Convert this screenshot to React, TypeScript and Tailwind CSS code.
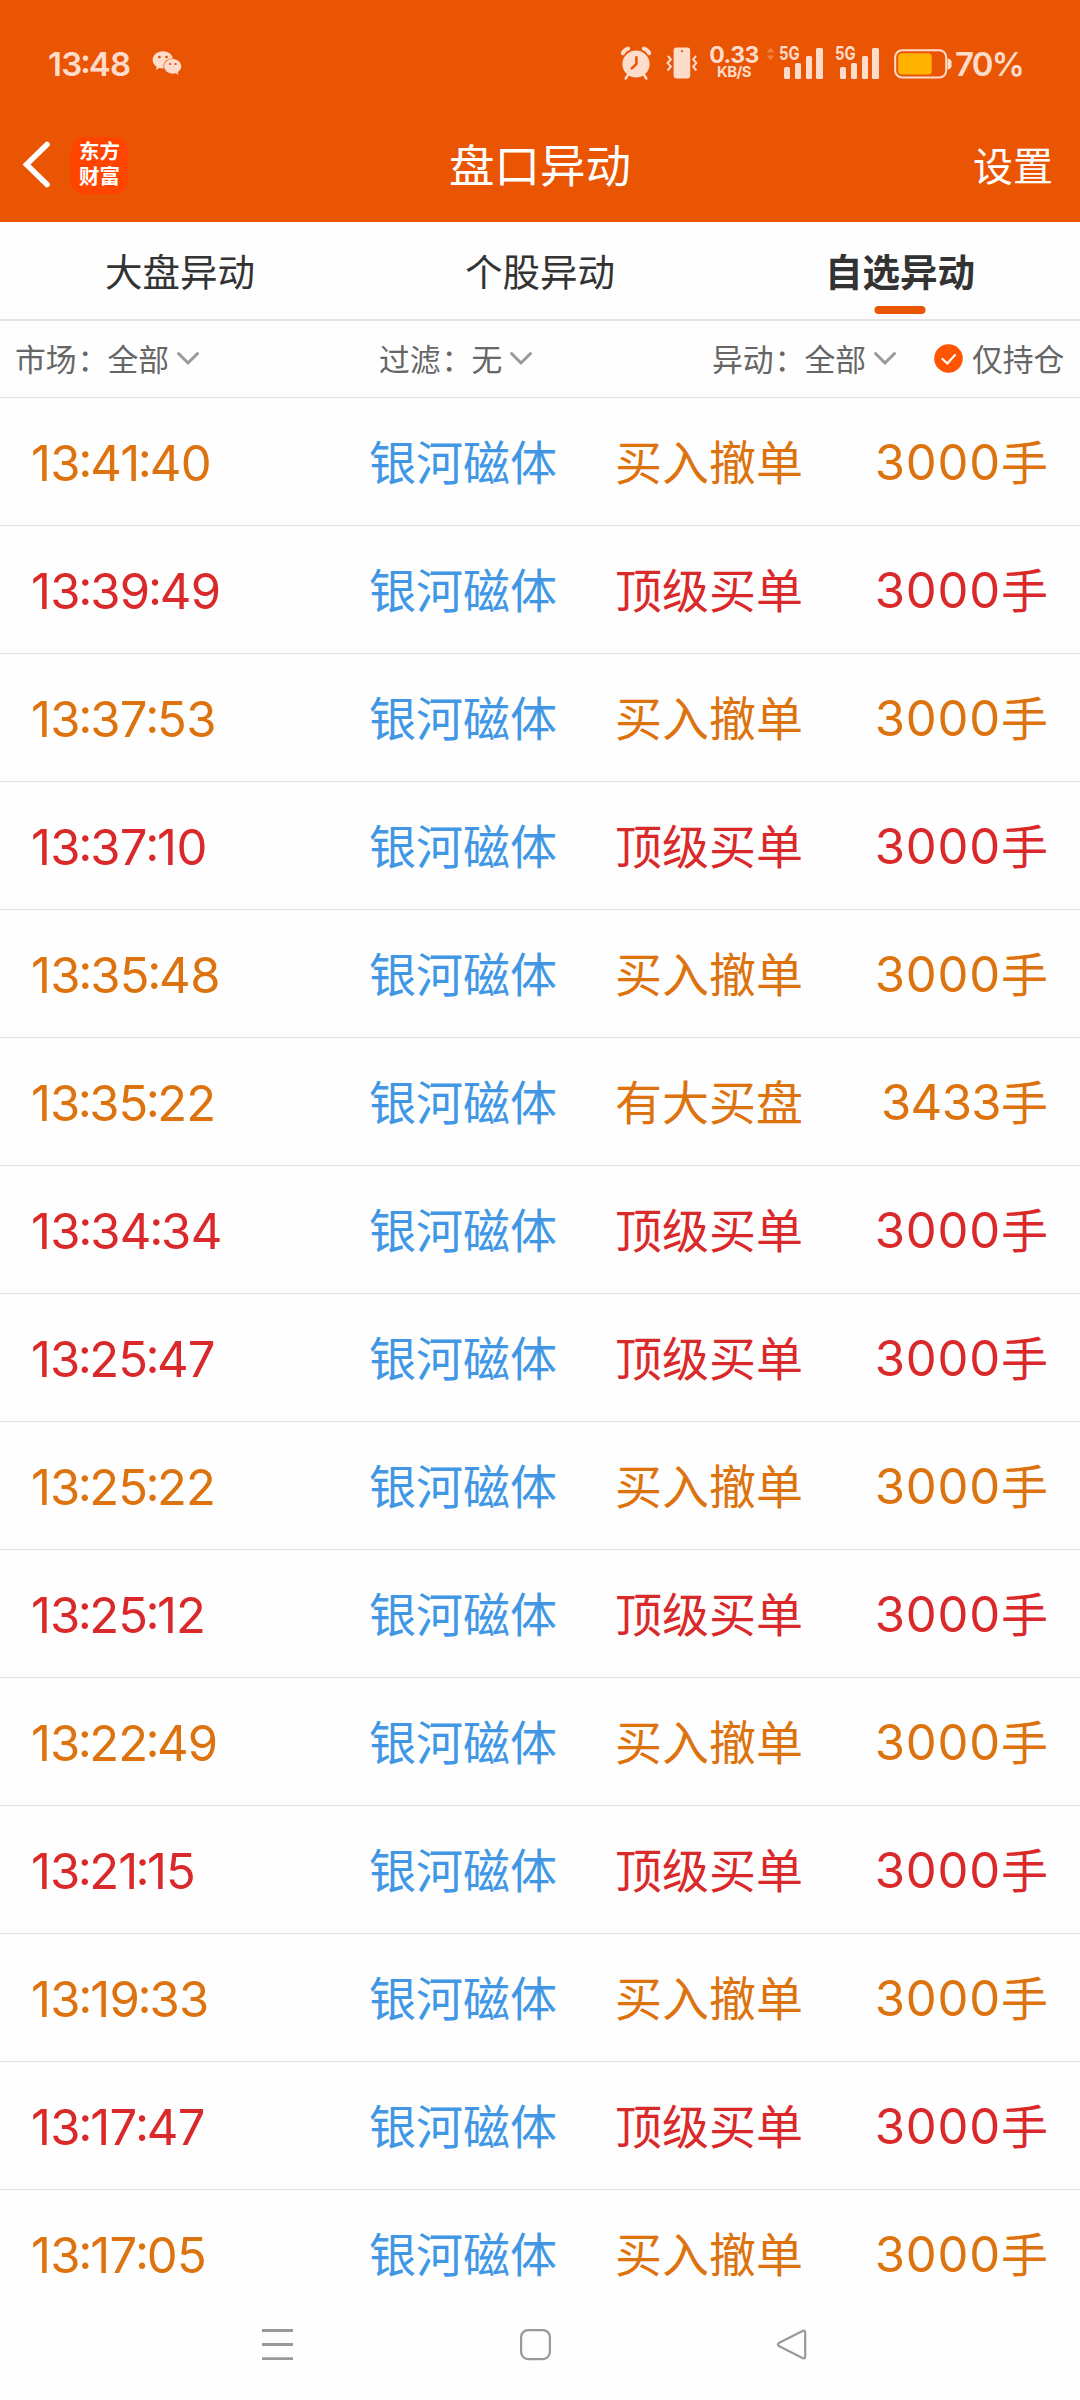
import { Fragment } from "react";
import { FaWeixin } from "react-icons/fa";

type Tone = "orange" | "red";

const CANCEL = "买入撤单";
const TOP = "顶级买单";

const rows: { time: string; kind: string; volume: string; tone: Tone }[] = [
  { time: "13:41:40", kind: CANCEL, volume: "3000", tone: "orange" },
  { time: "13:39:49", kind: TOP, volume: "3000", tone: "red" },
  { time: "13:37:53", kind: CANCEL, volume: "3000", tone: "orange" },
  { time: "13:37:10", kind: TOP, volume: "3000", tone: "red" },
  { time: "13:35:48", kind: CANCEL, volume: "3000", tone: "orange" },
  { time: "13:35:22", kind: "有大买盘", volume: "3433", tone: "orange" },
  { time: "13:34:34", kind: TOP, volume: "3000", tone: "red" },
  { time: "13:25:47", kind: TOP, volume: "3000", tone: "red" },
  { time: "13:25:22", kind: CANCEL, volume: "3000", tone: "orange" },
  { time: "13:25:12", kind: TOP, volume: "3000", tone: "red" },
  { time: "13:22:49", kind: CANCEL, volume: "3000", tone: "orange" },
  { time: "13:21:15", kind: TOP, volume: "3000", tone: "red" },
  { time: "13:19:33", kind: CANCEL, volume: "3000", tone: "orange" },
  { time: "13:17:47", kind: TOP, volume: "3000", tone: "red" },
  { time: "13:17:05", kind: CANCEL, volume: "3000", tone: "orange" },
];

const tones: Record<Tone, string> = {
  orange: "text-[#dd730f]",
  red: "text-[#d9292b]",
};

/** Clock text with tight colons centred on the digits. */
function Clock({ value }: { value: string }) {
  return (
    <>
      {value.split(":").map((part, i) => (
        <Fragment key={i}>
          {i > 0 && <span className="-mx-[0.035em] inline-block -translate-y-[0.09em]">:</span>}
          {part}
        </Fragment>
      ))}
    </>
  );
}

function AlarmIcon() {
  return (
    <svg width="32" height="34" viewBox="0 0 32 34" className="shrink-0">
      <g stroke="currentColor" strokeLinecap="round" fill="none">
        <path d="M2.8 7.2Q4.5 3.4 8.2 2.6M29.2 7.2Q27.5 3.4 23.8 2.6" strokeWidth="4" />
        <path d="M8 29l-2.3 3.4M24 29l2.3 3.4" strokeWidth="2.6" />
      </g>
      <circle cx="16" cy="18" r="13.6" fill="currentColor" />
      <path d="M16.4 11.2V18l-4.6 4.4" stroke="#ea5504" strokeWidth="2.6" strokeLinecap="round" fill="none" />
    </svg>
  );
}

function VibrateIcon() {
  return (
    <svg width="32" height="32" viewBox="0 0 32 32" className="shrink-0">
      <rect x="7.6" y="0.5" width="16.6" height="31" rx="3" fill="currentColor" />
      <circle cx="16" cy="4.2" r="1.1" fill="#ea5504" />
      <path
        d="M2 9l2.8 3.4L1.6 16l3.2 3.6L1.6 23.5M30 9l-2.8 3.4 3.2 3.6-3.2 3.6 3.2 3.9"
        stroke="currentColor"
        strokeWidth="2"
        fill="none"
      />
    </svg>
  );
}

function Signal() {
  return (
    <div className="relative h-8 w-11 shrink-0">
      <span className="absolute -top-[3px] left-0 origin-left scale-x-[0.78] text-[19px] leading-[20px] font-bold">5G</span>
      <div className="flex h-full items-end gap-[4.5px] pl-[5px]">
        <i className="h-[12px] w-[6.3px] rounded-[1.5px] bg-current" />
        <i className="h-[15.5px] w-[6.3px] rounded-[1.5px] bg-current" />
        <i className="h-[23px] w-[6.3px] rounded-[1.5px] bg-current" />
        <i className="h-[31px] w-[6.3px] rounded-[1.5px] bg-current" />
      </div>
    </div>
  );
}

function StatusBar() {
  return (
    <div className="flex h-[108px] items-center pt-[17px] pl-[48px] text-[#fddccb]">
      <span className="w-[104px] pt-[3px] text-[33px] leading-none font-semibold tracking-[-0.8px]">
        <Clock value="13:48" />
      </span>
      <FaWeixin className="h-[30px] w-[30px]" />
      <div className="ml-[438px] flex h-8 items-center">
        <AlarmIcon />
        <div className="ml-[14px] flex">
          <VibrateIcon />
        </div>
        <div className="ml-[10px] flex h-8 w-[52px] flex-col items-center">
          <span className="-mt-[1px] text-[23px] leading-[19px] font-bold tracking-[-0.6px]">0.33</span>
          <span className="text-[15px] leading-[14px] font-bold tracking-[-0.6px]">KB/S</span>
        </div>
        <svg width="9" height="14" viewBox="0 0 9 14" className="mb-[18px] ml-[6px] opacity-30">
          <path d="M0.5 5.5l4-5 4 5zM0.5 8.5h8l-4 5z" fill="currentColor" />
        </svg>
        <div className="ml-[4px] flex gap-3">
          <Signal />
          <Signal />
        </div>
        <svg width="58" height="30" viewBox="0 0 58 30" className="mt-[2px] ml-[15px] shrink-0">
          <rect x="1.2" y="1.2" width="51" height="27.4" rx="7" fill="none" stroke="currentColor" strokeWidth="2" />
          <rect x="4.2" y="4.2" width="33.5" height="21.4" rx="3.5" fill="#ffb300" />
          <path d="M53.5 9.5h1q3 1 3 3v5q0 2-3 3h-1z" fill="currentColor" />
        </svg>
        <span className="mt-[3px] ml-[3px] text-[33px] leading-none font-semibold tracking-[-1.8px]">70%</span>
      </div>
    </div>
  );
}

function TitleBar() {
  return (
    <div className="grid h-[114px] grid-cols-3 items-center text-white">
      <div className="flex items-center pl-[21px]">
        <svg width="30" height="48" viewBox="0 0 30 48" fill="none" stroke="currentColor" strokeWidth="5.500" strokeLinecap="round" strokeLinejoin="miter">
          <path d="M26 3.500L5.500 23.500L26 43.500" />
        </svg>
        <div className="ml-[20px] flex h-[57px] w-[57px] flex-col items-center justify-center rounded-[13px] bg-[#ff4400] pb-[2px] text-[20.500px] leading-[25px] font-bold">
          <span>东方</span>
          <span>财富</span>
        </div>
      </div>
      <h1 className="pt-[4px] text-center text-[45.500px] leading-[60px]">盘口异动</h1>
      <button className="pt-[3px] pr-[27px] text-right text-[40px] leading-[60px]">设置</button>
    </div>
  );
}

function Tabs() {
  return (
    <nav className="grid h-[99px] grid-cols-3 border-b-2 border-[#e4e4e4] text-center text-[37.500px] leading-[101px] text-[#333]">
      <span className="h-[97px]">大盘异动</span>
      <span className="h-[97px]">个股异动</span>
      <span className="relative h-[97px] font-bold">
        自选异动
        <i className="absolute bottom-[5px] left-1/2 h-2 w-[51px] -translate-x-1/2 rounded-full bg-[#ea5504]" />
      </span>
    </nav>
  );
}

function Filter({ label, value }: { label: string; value: string }) {
  return (
    <div className="flex items-center">
      <span>{label}</span>
      <span className="translate-x-[1px]">：</span>
      <span>{value}</span>
      <svg width="24" height="16" viewBox="0 0 24 16" fill="none" stroke="#999" strokeWidth="3" strokeLinecap="round" className="ml-[7px]">
        <path d="M2.500 2.500L12 12l9.500-9.500" />
      </svg>
    </div>
  );
}

function Filters() {
  return (
    <div className="flex h-[77px] items-center border-b border-[#e4e4e4] pl-[15px] text-[30.800px] leading-[77px] whitespace-nowrap text-[#666]">
      <div className="w-[364px]"><Filter label="市场" value="全部" /></div>
      <div className="w-[333px]"><Filter label="过滤" value="无" /></div>
      <div className="w-[222px]"><Filter label="异动" value="全部" /></div>
      <svg width="29" height="29" viewBox="0 0 29 29" fill="none" className="mr-[9px] mb-[2px]">
        <circle cx="14.500" cy="14.500" r="14.300" fill="#ff5500" />
        <path d="M8.500 15l4.800 4.500 7.700-8.500" stroke="#fff" strokeWidth="2.200" strokeLinecap="round" />
      </svg>
      <span>仅持仓</span>
    </div>
  );
}

export default function App() {
  return (
    <div lang="zh-CN" className="flex h-[2400px] w-[1080px] flex-col overflow-hidden bg-[#fefefe] font-[Inter,'Noto_Sans_CJK_SC',sans-serif]">
      <header className="bg-[#ea5504]">
        <StatusBar />
        <TitleBar />
      </header>
      <Tabs />
      <Filters />
      <main className="flex-1">
        {rows.map((r, i) => (
          <div
            key={r.time}
            className={`grid h-32 grid-cols-[338px_246px_1fr_auto] items-center border-b pt-[2px] pr-[32px] pl-[31px] text-[47px] leading-none whitespace-nowrap ${tones[r.tone]} ${i < rows.length - 1 ? "border-[#e4e4e4]" : "border-transparent"}`}
          >
            <span className={`pt-[1px] text-[49px] ${r.time.includes("2") ? "tracking-[-0.9px]" : "tracking-[-0.6px]"}`}>
              <Clock value={r.time} />
            </span>
            <span className="text-[#4297e4]">银河磁体</span>
            <span>{r.kind}</span>
            <span>
              <span className={`text-[49px] ${r.volume === "3000" ? "tracking-[0.8px]" : "tracking-[-0.6px]"}`}>{r.volume}</span>手
            </span>
          </div>
        ))}
      </main>
      <footer className="flex h-[82px] shrink-0 items-start pt-[11px] pl-[262px]">
        <svg width="32" height="32" viewBox="0 0 32 32" stroke="#999" strokeWidth="2.800">
          <path d="M0 1.500h31M0 15.500h31M0 29.700h31" />
        </svg>
        <svg width="32" height="32" viewBox="0 0 32 32" fill="none" stroke="#999" strokeWidth="2.200" className="ml-[226px]">
          <rect x="1.100" y="1.100" width="28.800" height="29" rx="7" />
        </svg>
        <svg width="32" height="32" viewBox="0 0 32 32" fill="none" stroke="#999" strokeWidth="2.200" strokeLinejoin="round" className="ml-[224px]">
          <path d="M27 1.700L2.800 14Q1 15.500 2.800 17L27 29.200Q29.200 30 29.200 27.500V3.500Q29.200 1 27 1.700z" />
        </svg>
      </footer>
    </div>
  );
}
